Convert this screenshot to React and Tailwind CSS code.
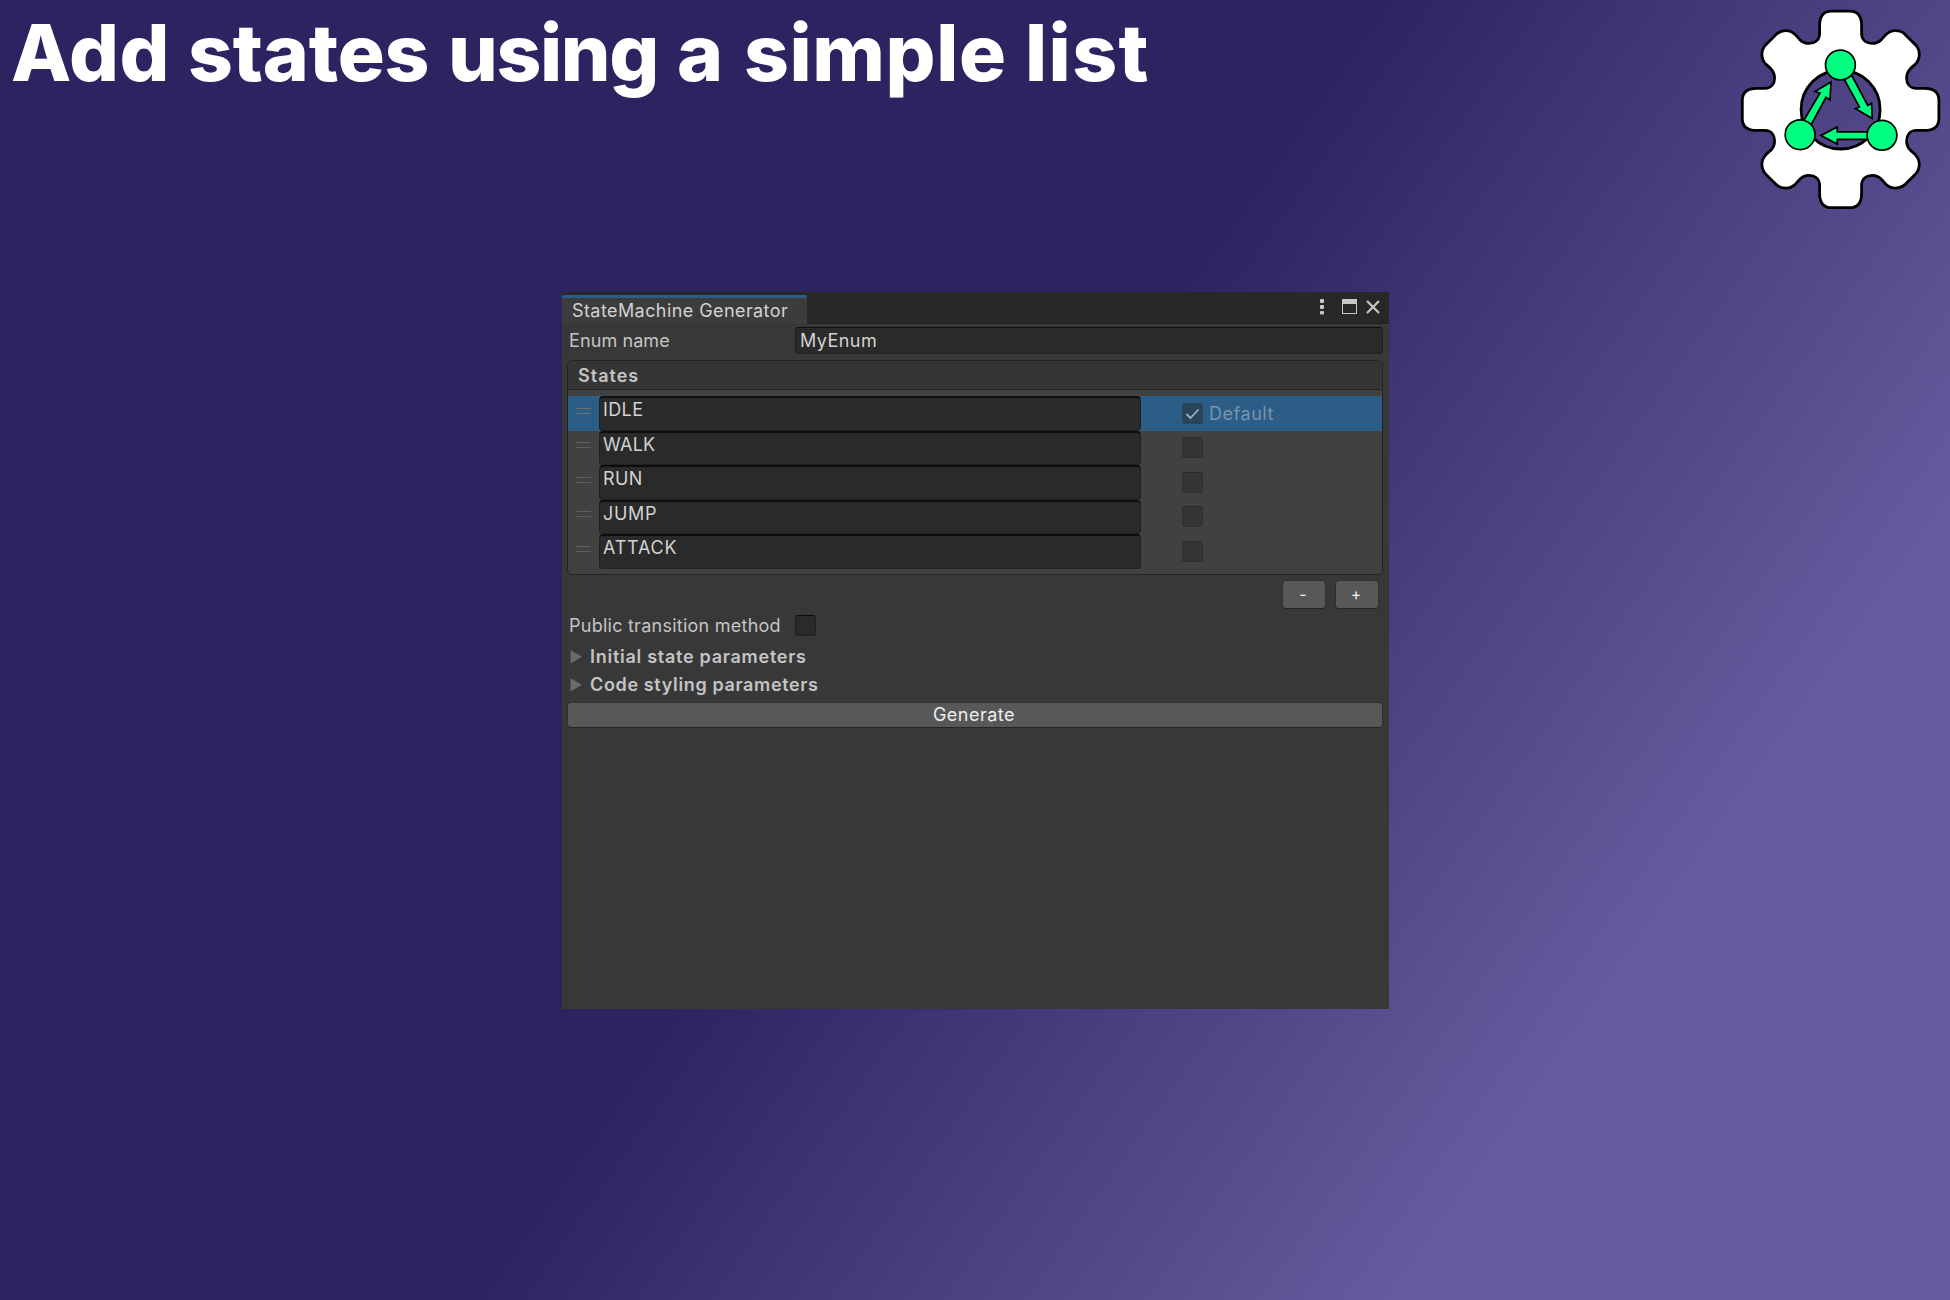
import React from "react";

const STATES = [
  { name: "IDLE", row: "h-[35px] bg-[#2c5d87]", check: "mt-[7px]", tracking: "tracking-[0.4px]" },
  { name: "WALK", row: "h-[34px]", check: "mt-[6px]", tracking: "tracking-[0.25px]" },
  { name: "RUN", row: "h-[35px]", check: "mt-[7px]", tracking: "tracking-[0.4px]" },
  { name: "JUMP", row: "h-[34px]", check: "mt-[6px]", tracking: "tracking-[0.7px]" },
  { name: "ATTACK", row: "h-[35px]", check: "mt-[7px]", tracking: "tracking-[0.8px]" },
];

const WORDS = [
  { text: "Add", className: "w-[177px] tracking-[0.3px]" },
  { text: "states", className: "w-[260px] tracking-[-0.2px]" },
  { text: "using", className: "w-[229px] tracking-[-1.4px]" },
  { text: "a", className: "w-[67px]" },
  { text: "simple", className: "w-[281px] tracking-[0.6px]" },
  { text: "list", className: "tracking-[1.4px]" },
];

function Title() {
  return (
    <h1 className="ml-[11px] mt-[5px] flex whitespace-pre text-[78.4px] leading-[96px] font-extrabold text-white">
      {WORDS.map((w) => (
        <span key={w.text} className={w.className}>{w.text} </span>
      ))}
    </h1>
  );
}

/* One quarter of the gear outline, as offsets from its centre. */
const QUARTER = [
  ["C", [-21, -93], [-17, -98.3], [-9, -98.3]],
  ["L", [9, -98.3]],
  ["C", [17, -98.3], [21, -93], [21, -84]],
  ["L", [21, -76]],
  ["C", [21, -69], [26, -66], [31.5, -66]],
  ["C", [36, -66], [39, -68], [41, -70]],
  ["L", [45, -74.5]],
  ["C", [50.5, -80], [59, -80], [64.5, -75]],
  ["L", [75, -64.5]],
  ["C", [80, -59], [80, -50.5], [74.5, -45]],
  ["L", [70, -41]],
  ["C", [68, -39], [66, -36], [66, -31.5]],
  ["C", [66, -26], [69, -21], [76, -21]],
  ["L", [84, -21]],
];

function turn([x, y], times) {
  let p = [x, y];
  for (let i = 0; i < times; i++) p = [-p[1], p[0]];
  return `${110.6 + p[0]} ${109.4 + p[1]}`;
}

const GEAR =
  `M${turn([-21, -84], 0)} ` +
  [0, 1, 2, 3]
    .map((q) => QUARTER.map(([c, ...pts]) => c + pts.map((p) => turn(p, q)).join(" ")).join(" "))
    .join(" ") +
  " Z";

function Logo() {
  return (
    <svg className="h-[220px] w-[220px]" viewBox="0 0 220 220" strokeLinejoin="round">
      <path
        d={GEAR + " M150.100 109.500 A39.500 39.500 0 1 0 71.100 109.500 A39.500 39.500 0 1 0 150.100 109.500 Z"}
        fill="#fff"
        fillRule="evenodd"
        stroke="#000"
        strokeWidth="2.8"
      />
      <g fill="#00ff80" stroke="#000" strokeWidth="1.7" strokeLinejoin="miter">
        <path d="M114 79 L129.500 107 L125.200 108.600 L142.200 118.500 L141.500 103.300 L137.800 105.500 L121.500 75 Z" />
        <path d="M73.500 121 L90 93 L85 91.500 L101 82 L100 99.900 L96 97.300 L81 125 Z" />
        <path d="M138 131.800 L107.200 131.800 L107.200 127 L91 135.500 L107.200 144 L107.200 139.300 L138 139.300 Z" />
        <circle cx="110.400" cy="65" r="14.900" />
        <circle cx="70.100" cy="134.700" r="14.900" />
        <circle cx="152" cy="135.300" r="14.900" />
      </g>
    </svg>
  );
}

function Tick() {
  return (
    <svg className="h-[21px] w-[21px]" viewBox="0 0 21 21" fill="none" stroke="#9db4c6" strokeWidth="1.8">
      <path d="M4.500 11 L8.500 15 L16.500 6.500" />
    </svg>
  );
}

function StateRow({ state, selected }) {
  return (
    <div className={`flex ${state.row}`}>
      <div className="flex w-[31px] items-center justify-center pb-[6px]">
        <div className={`h-[6px] w-[15px] border-y ${selected ? "border-[#6f6f6f]" : "border-[#5f5f5f]"}`} />
      </div>
      <div className={`h-full w-[542px] rounded-[4px] border border-t-2 border-[#202020] border-t-[#0d0d0d] bg-[#2a2a2a] pl-[3px] pt-[1px] text-[18px] leading-[22px] text-[#d2d2d2] ${state.tracking}`}>
        {state.name}
      </div>
      <div
        className={`ml-[41px] h-[21px] w-[21px] rounded-[3px] border ${state.check} ${
          selected ? "border-[#27465f] bg-[#2b435a]" : "border-[#303030] border-t-[#292929] bg-[#353535]"
        }`}
      >
        {selected && <div className="-ml-px -mt-px"><Tick /></div>}
      </div>
      {selected && (
        <span className="ml-[6px] mt-[7px] text-[18px] leading-[22px] tracking-[0.55px] text-[#7893aa]">Default</span>
      )}
    </div>
  );
}

function Foldout({ label, className }) {
  return (
    <div className={`flex items-center ${className}`}>
      <svg className="h-[14px] w-[12px]" viewBox="0 0 12 14">
        <path d="M0.500 0.200 L12 6.800 L0.500 13.500 Z" fill="#6b6b6b" />
      </svg>
      <span className="ml-[8px] text-[18px] leading-[22px] font-semibold text-[#c4c4c4]">{label}</span>
    </div>
  );
}

function TabBar() {
  return (
    <div className="flex h-[32px] justify-between border-b border-[#202020] bg-[#282828]">
      <div className="mt-[3px] h-[29px] w-[245px] rounded-t-[2px] border-t-[3px] border-[#2c5d87] bg-[#3c3c3c] pl-[10px] pt-[1px] text-[18px] leading-[24px] tracking-[0.42px] whitespace-nowrap text-[#d2d2d2]">
        StateMachine Generator
      </div>
      <svg className="mr-[9px] mt-[7px] h-[16px] w-[60px]" viewBox="0 0 60 16" fill="#c8c8c8">
        <rect x="0" y="0" width="4" height="4" rx="1" />
        <rect x="0" y="6" width="4" height="4" rx="1" />
        <rect x="0" y="12" width="4" height="3.500" rx="1" />
        <path fillRule="evenodd" d="M22 0 h15 v15 h-15 Z M23 5 v9 h13 v-9 Z" />
        <path d="M47 2 L59 14 M59 2 L47 14" stroke="#c8c8c8" strokeWidth="2.200" />
      </svg>
    </div>
  );
}

function GeneratorWindow() {
  return (
    <div className="mt-[72px] ml-[562px] flex h-[717px] w-[827px] flex-col bg-[#383838] text-[18px] text-[#c4c4c4]">
      <TabBar />
      <div className="mt-[3px] flex pl-[7px] pr-[6px]">
        <span className="w-[226px] pt-[3px] leading-[22px] tracking-[0.1px]">Enum name</span>
        <div className="h-[27px] flex-1 rounded-[4px] border border-[#202020] border-t-[#0d0d0d] bg-[#2a2a2a] pl-[4px] pt-[2px] leading-[22px] tracking-[0.45px] text-[#d2d2d2]">
          MyEnum
        </div>
      </div>
      <div className="ml-[5px] mr-[6px] mt-[6px] h-[215px] rounded-[5px] border border-[#232323] bg-[#414141]">
        <div className="h-[29px] rounded-t-[4px] border-b border-[#232323] bg-[#353535] pl-[10px] pt-[4px] leading-[22px] font-semibold tracking-[1px]">
          States
        </div>
        <div className="mt-[6px]">
          {STATES.map((s, i) => (
            <StateRow key={s.name} state={s} selected={i === 0} />
          ))}
        </div>
      </div>
      <div className="mr-[10px] mt-[5px] flex justify-end gap-[9px]">
        {["-", "+"].map((c) => (
          <button
            key={c}
            className="h-[29px] w-[44px] rounded-[4px] border border-[#303030] border-b-[#242424] bg-[#585858] pr-[2px] text-[16px] leading-[27px] text-[#eeeeee]"
          >
            {c}
          </button>
        ))}
      </div>
      <div className="mt-[6px] flex pl-[7px]">
        <span className="w-[226px] leading-[22px] tracking-[0.25px] whitespace-nowrap">Public transition method</span>
        <div className="h-[21px] w-[21px] rounded-[3px] border border-[#212121] border-t-[#0d0d0d] bg-[#2a2a2a]" />
      </div>
      <Foldout label="Initial state parameters" className="mt-[9px] pl-[8px] tracking-[0.73px]" />
      <Foldout label="Code styling parameters" className="mt-[6px] pl-[8px] tracking-[0.64px]" />
      <button className="ml-[5px] mr-[6px] mt-[6px] h-[26px] rounded-[4px] border border-[#303030] border-b-[#242424] bg-[#585858] pr-[2px] leading-[24px] tracking-[0.5px] text-[#eeeeee]">
        Generate
      </button>
    </div>
  );
}

export default function App() {
  return (
    <main className="flex h-[1300px] w-[1950px] flex-col overflow-hidden bg-[linear-gradient(125deg,#2b2461_0%,#2b2461_48%,#423878_60%,#685a9e_81%,#685a9e_100%)] font-['Inter',sans-serif]">
      <header className="flex h-[220px] justify-between">
        <Title />
        <Logo />
      </header>
      <GeneratorWindow />
    </main>
  );
}
